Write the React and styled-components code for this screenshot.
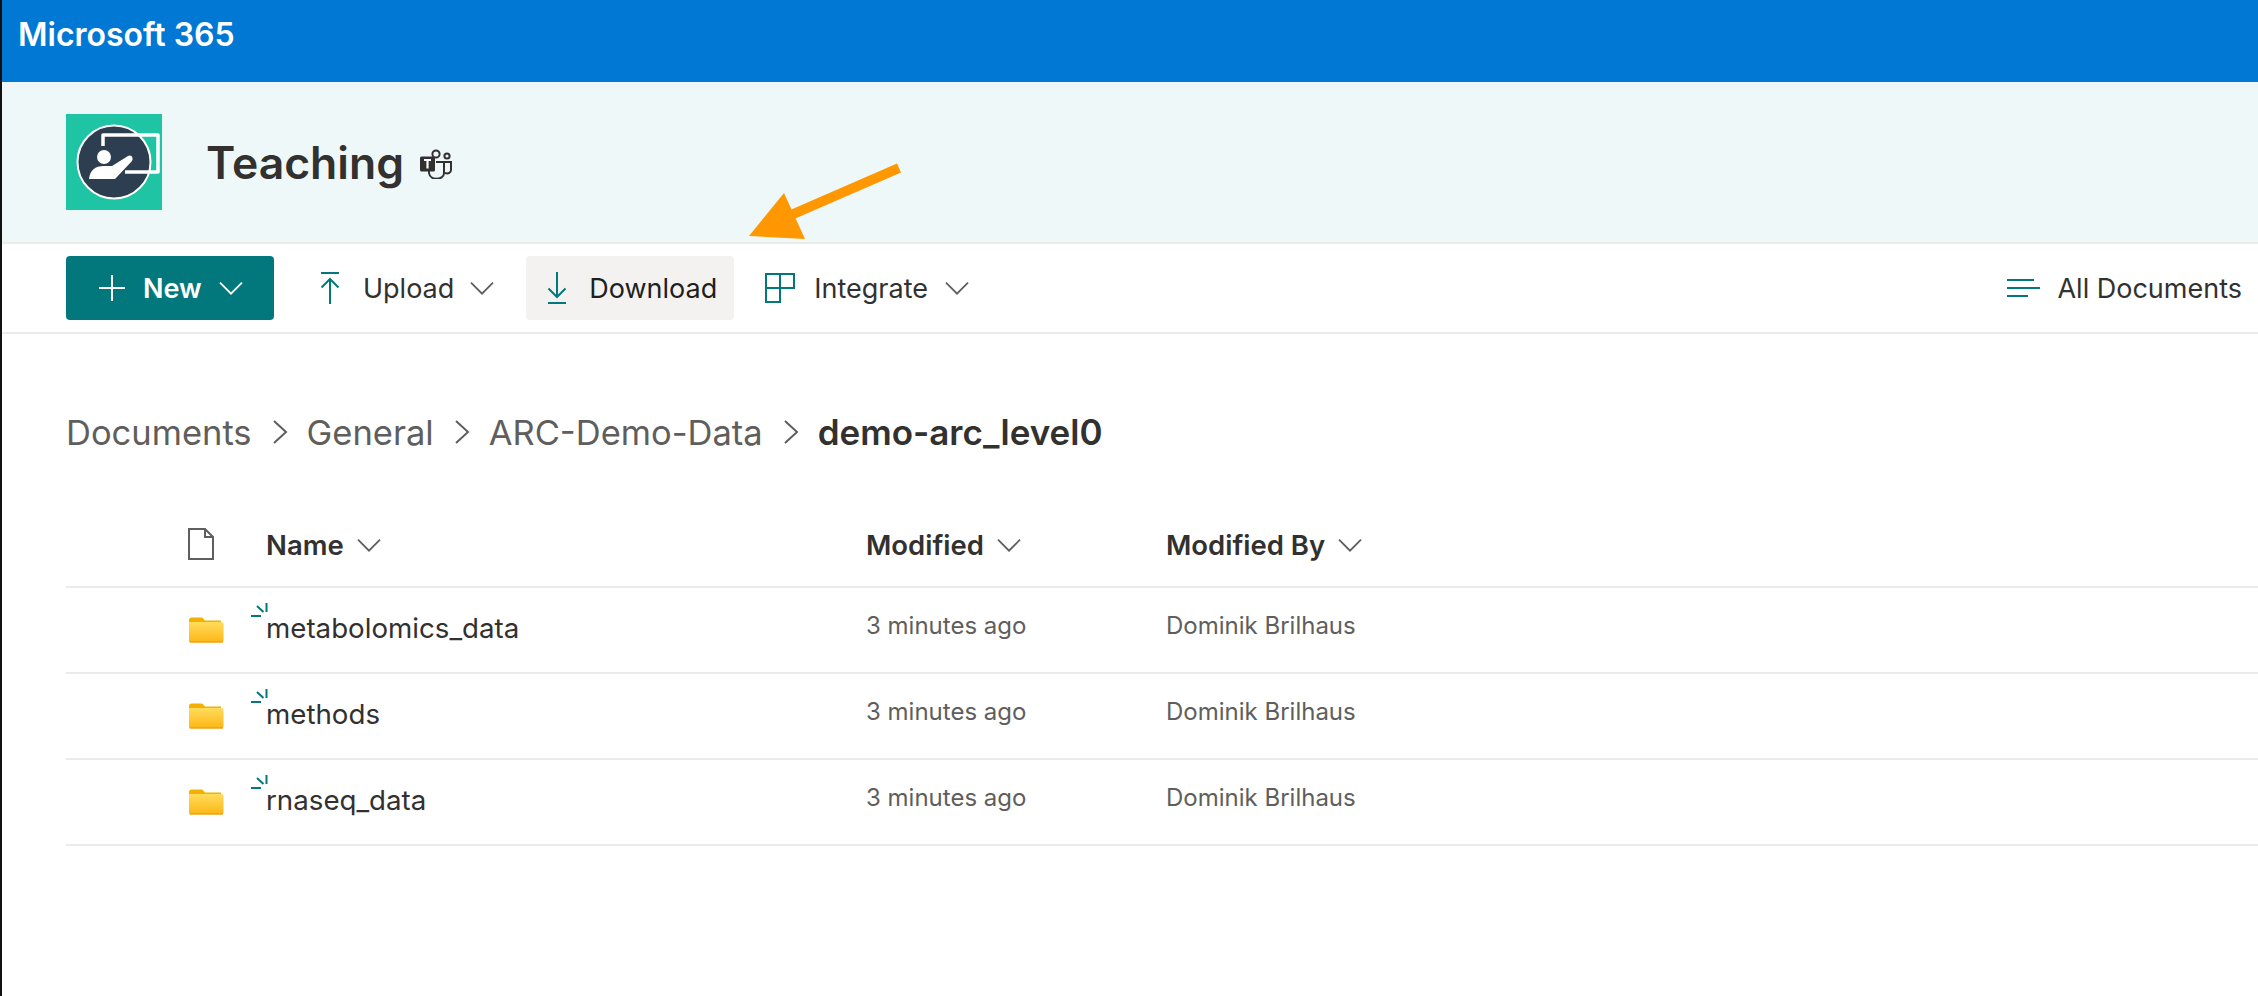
import React from 'react'
import styled, { createGlobalStyle } from 'styled-components'

const GlobalStyle = createGlobalStyle`
    html, body {
        margin: 0;
        height: 100%;
        overflow: hidden;
        background: #fff;
    }
    body {
        font-family: Inter, "Liberation Sans", sans-serif;
        color: #323130;
    }
`

const Page = styled.div`
    position: relative;
    width: 2258px;
    height: 996px;
    box-sizing: border-box;
    border-left: 2px solid #111;
    overflow: hidden;
`

const SuiteBar = styled.div`
    height: 82px;
    background: #0078d4;
    color: #fff;
    font-size: 32px;
    font-weight: 600;
    line-height: 70px;
    padding-left: 16px;
`

const SiteHeader = styled.div`
    height: 160px;
    box-sizing: border-box;
    background: #eff8f9;
    display: flex;
    align-items: center;
    padding: 0 0 0 64px;
`

const Title = styled.h1`
    margin: 2px 15px 0 44px;
    font-size: 44.5px;
    font-weight: 600;
    line-height: 60px;
    color: #323130;
`

const CommandBar = styled.div`
    height: 92px;
    box-sizing: border-box;
    border-top: 2px solid #edebe9;
    border-bottom: 2px solid #edebe9;
    display: flex;
    align-items: center;
    padding: 0 0 0 64px;
`

const NewButton = styled.div`
    width: 208px;
    height: 64px;
    box-sizing: border-box;
    margin-right: 30px;
    background: #03787c;
    border-radius: 4px;
    color: #fff;
    font-size: 27px;
    font-weight: 600;
    display: flex;
    align-items: center;
    padding-left: 32px;
    gap: 17px;
`

const Command = styled.div`
    height: 64px;
    box-sizing: border-box;
    display: flex;
    align-items: center;
    padding: 0 ${(props) => props.$right || 16}px 0 ${(props) => props.$left || 16}px;
    margin-right: ${(props) => props.$margin ?? 16}px;
    border-radius: 4px;
    font-size: 27px;
    background: ${(props) => props.$active ? '#f3f2f1' : 'transparent'};
    color: ${(props) => props.$active ? '#201f1e' : '#323130'};
`

const Label = styled.span`
    margin-left: ${(props) => props.$gap || 20}px;
    margin-right: ${(props) => props.$after || 0}px;
`

const Spacer = styled.div`
    flex: 1;
`

const Breadcrumb = styled.nav`
    display: flex;
    align-items: center;
    height: 60px;
    margin: 68px 0 0 64px;
    font-size: 34.5px;
    color: #605e5c;
`

const Crumb = styled.span`
    font-weight: ${(props) => props.$current ? 600 : 400};
    font-size: ${(props) => props.$current ? '35px' : 'inherit'};
    color: ${(props) => props.$current ? '#323130' : '#605e5c'};
`

const Separator = styled.svg`
    width: 16px;
    height: 24px;
    margin: 0 19px 0 20px;
    fill: none;
    stroke: #605e5c;
    stroke-width: 2;
`

const Table = styled.div`
    margin: 44px 0 0 64px;
`

const Row = styled.div`
    display: grid;
    grid-template-columns: 200px 600px 300px 1fr;
    height: ${(props) => props.$header ? 82 : 86}px;
    box-sizing: border-box;
    border-bottom: 2px solid #edebe9;
    align-items: center;
`

const IconCell = styled.div`
    display: flex;
    justify-content: flex-start;
    padding-left: 122px;
    margin-top: ${(props) => props.$top || 0}px;
`

const HeaderCell = styled.div`
    display: flex;
    align-items: center;
    gap: 13px;
    font-size: 27.5px;
    font-weight: 600;
    color: #323130;
    margin-bottom: 2px;
`

const NameCell = styled.div`
    position: relative;
    font-size: 27.7px;
    color: #323130;
    margin-bottom: 4px;
`

const NewMarker = styled.svg`
    position: absolute;
    left: -15px;
    top: -8px;
    width: 18px;
    height: 18px;
    stroke: #03787c;
    stroke-width: 2;
`

const MetaCell = styled.div`
    font-size: 24px;
    color: #605e5c;
    margin-bottom: 9px;
`

const Arrow = styled.svg`
    position: absolute;
    left: 745px;
    top: 160px;
    width: 160px;
    height: 84px;
`

function Chevron({ color = '#605e5c', size = 24 }) {
    return (
        <svg width={size} height={size * 0.6} viewBox="0 0 24 14" fill="none" stroke={color} strokeWidth="1.8">
            <path d="M1 1.5 12 12.5 23 1.5" />
        </svg>
    )
}

function SiteLogo() {
    return (
        <svg width="96" height="96" viewBox="0 0 96 96">
            <rect width="96" height="96" fill="#1fc4a5" />
            <circle cx="48" cy="48" r="36.5" fill="#2c3e50" stroke="#fff" strokeWidth="2" />
            <path d="M37 32V21H92V58H59" fill="none" stroke="#fff" strokeWidth="3.5" strokeLinejoin="round" />
            <circle cx="38" cy="43" r="7" fill="#fff" />
            <path d="M23 65C24 56 29 52 38 52H46L62 42C65 40 68 44 66 47L49 65Z" fill="#fff" />
        </svg>
    )
}

function TeamsIcon() {
    return (
        <svg width="34" height="30" viewBox="0 0 34 30" style={{ marginTop: 4 }}>
            <g fill="none" stroke="#323130" strokeWidth="2">
                <circle cx="17" cy="5" r="3.6" />
                <circle cx="28" cy="7" r="2.6" />
                <path d="M24 13H32V21C32 24 29 25 26 24" />
                <path d="M10 15V24C11 32 25 31 25 24V13H17" />
            </g>
            <rect x="1" y="7.5" width="15" height="15" rx="1.5" fill="#323130" />
            <path d="M5 11H12M8.5 11V19.5" stroke="#fff" strokeWidth="2.2" fill="none" />
        </svg>
    )
}

function PlusIcon() {
    return (
        <svg width="28" height="28" viewBox="0 0 28 28" stroke="#fff" strokeWidth="2">
            <path d="M14 1V27M1 14H27" />
        </svg>
    )
}

function UploadIcon() {
    return (
        <svg width="20" height="32" viewBox="0 0 20 32" fill="none" stroke="#03787c" strokeWidth="2">
            <path d="M1 1H19M10 32V8M1.5 15.5 10 7 18.5 15.5" />
        </svg>
    )
}

function DownloadIcon() {
    return (
        <svg width="20" height="32" viewBox="0 0 20 32" fill="none" stroke="#03787c" strokeWidth="2">
            <path d="M1 31H19M10 0V24M1.5 16.5 10 25 18.5 16.5" />
        </svg>
    )
}

function IntegrateIcon() {
    return (
        <svg width="30" height="30" viewBox="0 0 30 30" fill="none" stroke="#03787c" strokeWidth="2">
            <path d="M1 1H29V15H15V29H1ZM1 15H15V1" />
        </svg>
    )
}

function ViewIcon() {
    return (
        <svg width="33" height="20" viewBox="0 0 33 20" stroke="#03787c" strokeWidth="2">
            <path d="M0 2H27M0 10H33M0 18H21" />
        </svg>
    )
}

function FileIcon() {
    return (
        <svg width="26" height="32" viewBox="0 0 26 32" fill="none" stroke="#605e5c" strokeWidth="2">
            <path d="M1 1H17L25 9V31H1ZM17 1V9H25" />
        </svg>
    )
}

function FolderIcon({ id }) {
    return (
        <svg width="36" height="26" viewBox="0 0 36 26">
            <defs>
                <linearGradient id={id} x1="0" y1="0" x2="0" y2="1">
                    <stop offset="0" stopColor="#ffdc5c" />
                    <stop offset="1" stopColor="#fdb614" />
                </linearGradient>
            </defs>
            <path d="M1 3C1 1.5 2 .5 3.5 .5H13C14.5 .5 15 1 16 2.5L17 3.5H33V8H1Z" fill="#f2b100" />
            <path d="M1 5H33.5C34.5 5 35.5 6 35.5 7V23.5C35.5 24.5 34.5 25.5 33.5 25.5H3C2 25.5 1 24.5 1 23.5Z" fill={`url(#${id})`} />
            <path d="M1.5 25H35" stroke="#e39a0c" strokeWidth="1.2" />
        </svg>
    )
}

const rows = [
    { name: 'metabolomics_data', id: 'folder-a' },
    { name: 'methods', id: 'folder-b' },
    { name: 'rnaseq_data', id: 'folder-c' },
]

export default function App() {
    return (
        <Page>
            <GlobalStyle />
            <SuiteBar>Microsoft 365</SuiteBar>
            <SiteHeader>
                <SiteLogo />
                <Title>Teaching</Title>
                <TeamsIcon />
            </SiteHeader>
            <CommandBar>
                <NewButton>
                    <PlusIcon />
                    New
                    <Chevron color="#fff" />
                </NewButton>
                <Command>
                    <UploadIcon />
                    <Label $gap={23} $after={16}>Upload</Label>
                    <Chevron />
                </Command>
                <Command $active $left={21} $right={17} $margin={15}>
                    <DownloadIcon />
                    <Label $gap={22}>Download</Label>
                </Command>
                <Command>
                    <IntegrateIcon />
                    <Label $gap={19} $after={17}>Integrate</Label>
                    <Chevron />
                </Command>
                <Spacer />
                <Command $right={16} $margin={0}>
                    <ViewIcon />
                    <Label $gap={17}>All Documents</Label>
                </Command>
            </CommandBar>
            <Breadcrumb>
                <Crumb>Documents</Crumb>
                <Separator viewBox="0 0 16 24"><path d="M2 1 14 12 2 23" /></Separator>
                <Crumb>General</Crumb>
                <Separator viewBox="0 0 16 24"><path d="M2 1 14 12 2 23" /></Separator>
                <Crumb>ARC-Demo-Data</Crumb>
                <Separator viewBox="0 0 16 24"><path d="M2 1 14 12 2 23" /></Separator>
                <Crumb $current>demo-arc_level0</Crumb>
            </Breadcrumb>
            <Table>
                <Row $header>
                    <IconCell $top={-4}><FileIcon /></IconCell>
                    <HeaderCell>Name <Chevron /></HeaderCell>
                    <HeaderCell>Modified <Chevron /></HeaderCell>
                    <HeaderCell>Modified By <Chevron /></HeaderCell>
                </Row>
                {rows.map((row) => (
                    <Row key={row.id}>
                        <IconCell><FolderIcon id={row.id} /></IconCell>
                        <NameCell>
                            <NewMarker viewBox="0 0 18 18">
                                <path d="M15.5 0V9M6 3 12.5 9M0 13H10" />
                            </NewMarker>
                            {row.name}
                        </NameCell>
                        <MetaCell>3 minutes ago</MetaCell>
                        <MetaCell>Dominik Brilhaus</MetaCell>
                    </Row>
                ))}
            </Table>
            <Arrow viewBox="0 0 160 84">
                <path d="M152 8 44 55" stroke="#ff9800" strokeWidth="10" fill="none" />
                <path d="M2 76 37 33 58 79Z" fill="#ff9800" />
            </Arrow>
        </Page>
    )
}
